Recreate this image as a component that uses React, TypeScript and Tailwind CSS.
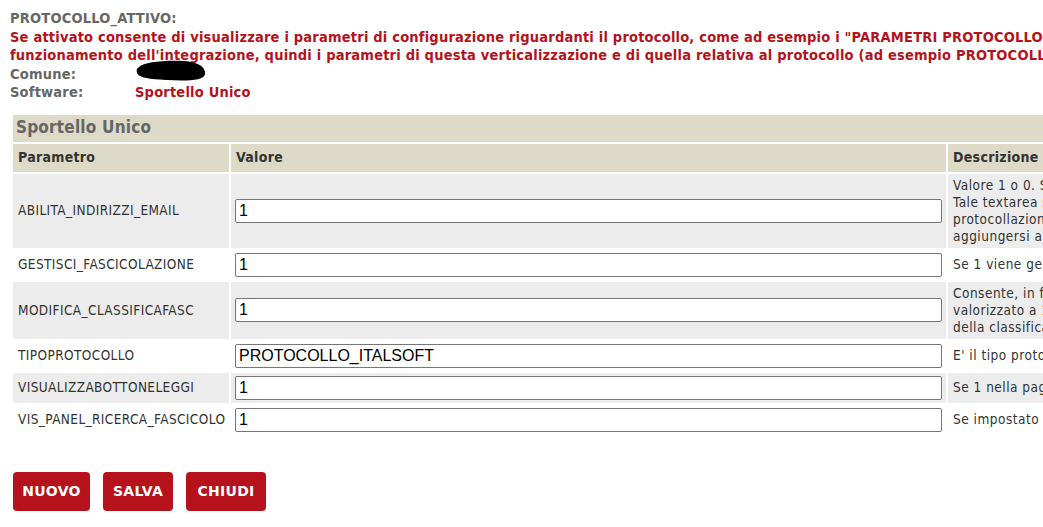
import React from "react";

const tahoma = { fontFamily: '"DejaVu Sans Condensed", "DejaVu Sans", sans-serif' };

type Row = {
  name: string;
  value: string;
  desc: string[];
  shaded: boolean;
};

const rows: Row[] = [
  {
    name: "ABILITA_INDIRIZZI_EMAIL",
    value: "1",
    desc: [
      "Valore 1 o 0. Se 1 abilita la textarea degli indirizzi email.",
      "Tale textarea serve per inserire gli indirizzi a cui inviare le",
      "protocollazioni effettuate, separati da punto e virgola, da",
      "aggiungersi al destinatario principale.",
    ],
    shaded: true,
  },
  {
    name: "GESTISCI_FASCICOLAZIONE",
    value: "1",
    desc: ["Se 1 viene gestita la fascicolazione della pratica."],
    shaded: false,
  },
  {
    name: "MODIFICA_CLASSIFICAFASC",
    value: "1",
    desc: [
      "Consente, in fase di fascicolazione, se il parametro è",
      "valorizzato a 1 di permettere la modifica manuale",
      "della classifica del fascicolo.",
    ],
    shaded: true,
  },
  {
    name: "TIPOPROTOCOLLO",
    value: "PROTOCOLLO_ITALSOFT",
    desc: ["E' il tipo protocollo utilizzato dall'ente."],
    shaded: false,
  },
  {
    name: "VISUALIZZABOTTONELEGGI",
    value: "1",
    desc: ["Se 1 nella pagina viene visualizzato il bottone leggi."],
    shaded: true,
  },
  {
    name: "VIS_PANEL_RICERCA_FASCICOLO",
    value: "1",
    desc: ["Se impostato a 1 visualizza il pannello di ricerca fascicolo."],
    shaded: false,
  },
];

function Redaction() {
  return (
    <svg width="74" height="24" viewBox="0 0 74 24" className="absolute left-[124px] top-[-6px]">
      <path
        d="M5 8 C 10 3, 30 1, 50 2 C 64 3, 72 8, 71 15 C 70 22, 52 22, 32 21 C 16 20, 5 19, 3 14 C 2 11, 3 9, 5 8 Z"
        fill="#000"
      />
    </svg>
  );
}

function RedButton({ label, width }: { label: string; width: string }) {
  return (
    <button
      type="button"
      className={`h-[39px] ${width} rounded-[4px] bg-[#b5121b] text-center text-[14px] font-bold tracking-[0.3px] text-white`}
      style={{ fontFamily: '"DejaVu Sans", sans-serif' }}
    >
      {label}
    </button>
  );
}

export default function App() {
  return (
    <div className="h-[527px] w-[1043px] overflow-hidden bg-white" style={tahoma}>
      <div className="whitespace-nowrap pl-[10px] pt-[9px] text-[14.5px] font-bold leading-[18.5px] tracking-[0.2px]">
        <div className="text-[#666666]">PROTOCOLLO_ATTIVO:</div>
        <div className="text-[#b5121b]">
          Se attivato consente di visualizzare i parametri di configurazione riguardanti il protocollo, come ad esempio i "PARAMETRI PROTOCOLLO" necessari al
        </div>
        <div className="text-[#b5121b]">
          funzionamento dell'integrazione, quindi i parametri di questa verticalizzazione e di quella relativa al protocollo (ad esempio PROTOCOLLO_ITALSOFT).
        </div>
        <div className="relative flex text-[#666666]">
          <span className="w-[125px]">Comune:</span>
          <Redaction />
        </div>
        <div className="flex">
          <span className="w-[125px] text-[#666666]">Software:</span>
          <span className="text-[#b5121b]">Sportello Unico</span>
        </div>
      </div>

      <table className="ml-[11px] mt-[11px] w-[1340px] table-fixed border-separate border-spacing-[2px] text-left">
        <colgroup>
          <col className="w-[216px]" />
          <col className="w-[715px]" />
          <col />
        </colgroup>
        <thead>
          <tr>
            <th
              colSpan={3}
              className="h-[27px] bg-[#dddac7] px-[3px] align-middle text-[17px] font-bold tracking-[0.2px] text-[#666666]"
            >
              Sportello Unico
            </th>
          </tr>
          <tr>
            <th className="h-[28px] bg-[#dddac7] px-[5px] text-[14px] font-bold tracking-[0.3px] text-[#333333]">Parametro</th>
            <th className="h-[28px] bg-[#dddac7] px-[5px] text-[14px] font-bold tracking-[0.3px] text-[#333333]">Valore</th>
            <th className="h-[28px] bg-[#dddac7] px-[5px] text-[14px] font-bold tracking-[0.3px] text-[#333333]">Descrizione</th>
          </tr>
        </thead>
        <tbody>
          {rows.map((r) => {
            const bg = r.shaded ? "bg-[#ececec]" : "bg-white";
            return (
              <tr key={r.name}>
                <td className={`${bg} px-[5px] py-[3px] align-middle text-[13.5px] tracking-[0.4px] text-[#333333]`}>{r.name}</td>
                <td className={`${bg} px-[4px] py-[3px] align-middle`}>
                  <input
                    type="text"
                    defaultValue={r.value}
                    className="block h-[24px] w-[707px] rounded-[2px] border border-[#767676] bg-white px-[3px] text-[16px] text-black outline-none"
                    style={{ fontFamily: '"Liberation Sans", Arial, sans-serif' }}
                  />
                </td>
                <td className={`${bg} px-[5px] py-[3px] align-middle text-[13.5px] leading-[17px] tracking-[0.5px] text-[#333333]`}>
                  {r.desc.map((l, i) => (
                    <div key={i} className="whitespace-nowrap">
                      {l}
                    </div>
                  ))}
                </td>
              </tr>
            );
          })}
        </tbody>
      </table>

      <div className="ml-[13px] mt-[35px] flex gap-[13px]">
        <RedButton label="NUOVO" width="w-[77px]" />
        <RedButton label="SALVA" width="w-[70px]" />
        <RedButton label="CHIUDI" width="w-[80px]" />
      </div>
    </div>
  );
}
